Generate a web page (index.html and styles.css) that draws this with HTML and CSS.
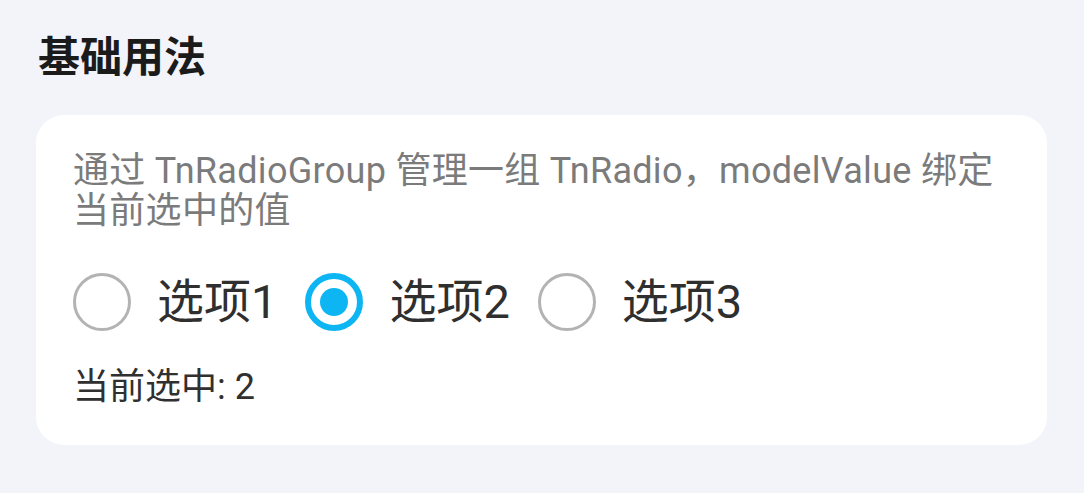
FILE: index.html
```html
<!DOCTYPE html>
<html lang="zh-CN">
<head>
<meta charset="utf-8">
<link rel="stylesheet" href="styles.css">
</head>
<body>
<div class="page">
  <h2 class="title">基础用法</h2>
  <div class="card">
    <p class="desc">通过 TnRadioGroup 管理一组 TnRadio，modelValue 绑定当前选中的值</p>
    <div class="radio-group">
      <label class="radio"><span class="circle"></span><span class="label">选项1</span></label>
      <label class="radio checked"><span class="circle"></span><span class="label">选项2</span></label>
      <label class="radio"><span class="circle"></span><span class="label">选项3</span></label>
    </div>
    <p class="current">当前选中: 2</p>
  </div>
</div>
</body>
</html>
```
FILE: styles.css
```css
* { box-sizing: border-box; }
html, body { margin: 0; padding: 0; }
body {
  background: #f3f4f9;
  font-family: Roboto, "Noto Sans CJK SC", sans-serif;
  width: 1084px;
  height: 493px;
  overflow: hidden;
}
.page {
  padding: 26px 37px 0 36px;
}
.title {
  margin: 0 0 0 2px;
  font-size: 42px;
  line-height: 56px;
  font-weight: 700;
  color: #1b1b1b;
  font-family: "Noto Sans CJK SC", sans-serif;
}
.card {
  margin-top: 33px;
  background: #fff;
  border-radius: 28px;
  padding: 36px 37px 37px 37px;
  width: 1011px;
}
.desc {
  margin: 0;
  font-size: 36px;
  line-height: 40px;
  letter-spacing: 0.3px;
  color: #7b7b7b;
}
.radio-group {
  display: flex;
  align-items: center;
  gap: 28px;
  margin-top: 42px;
}
.radio {
  display: flex;
  align-items: center;
  gap: 26px;
}
.circle {
  width: 58px;
  height: 58px;
  border-radius: 50%;
  border: 3px solid #b3b3b3;
  display: flex;
  align-items: center;
  justify-content: center;
  flex: none;
}
.radio.checked .circle {
  border: 6px solid #0db6f3;
}
.radio.checked .circle::after {
  content: "";
  width: 28px;
  height: 28px;
  border-radius: 50%;
  background: #0db6f3;
}
.label {
  font-size: 47px;
  line-height: 58px;
  color: #2f2f2f;
}
.current {
  margin: 35px 0 0 0;
  font-size: 36px;
  line-height: 42px;
  color: #303030;
}
```
